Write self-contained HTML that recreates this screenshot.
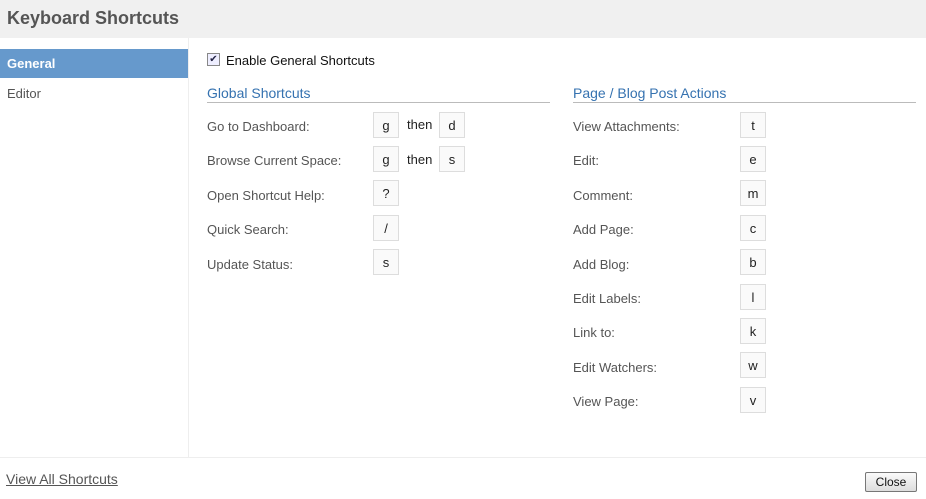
<!DOCTYPE html><html><head><style>
body{margin:0;width:926px;height:499px;position:relative;font-family:"Liberation Sans",Arial,sans-serif;background:#fff;overflow:hidden}
.hd{position:absolute;left:0;top:0;width:926px;height:38px;background:#f0f0f0}
.hd span{position:absolute;left:7px;top:8px;font-size:18px;font-weight:bold;color:#555}
.side{position:absolute;left:0;top:38px;width:188px;height:419px;border-right:1px solid #eee}
.sel{position:absolute;left:0;top:49px;width:188px;height:29px;background:#6699cc;color:#fff;font-weight:bold;font-size:13px;line-height:29px;text-indent:7px}
.ed{position:absolute;left:7px;top:86px;font-size:13px;color:#555}
.ft{position:absolute;left:0;top:457px;width:926px;border-top:1px solid #eee}
.t{position:absolute;font-size:13px;color:#555}
.h{position:absolute;font-size:14px;color:#3572b0;border-bottom:1px solid #bbb;padding-bottom:1px}
.k{position:absolute;width:24px;height:24px;border:1px solid #ddd;background:#fafafa;font-size:13px;color:#222;text-align:center;line-height:26px}
.th{position:absolute;font-size:13px;color:#222}
</style></head><body>
<div class="hd"><span>Keyboard Shortcuts</span></div>
<div class="side"></div>
<div class="sel">General</div>
<div class="ed">Editor</div>
<div style="position:absolute;left:207px;top:53px;width:11px;height:11px;border:1px solid #888;background:#eef;font-size:10px;line-height:11px;text-align:center;color:#224">✔</div>
<div class="t" style="left:226px;top:53px;color:#111">Enable General Shortcuts</div>
<div class="h" style="left:207px;top:85px;width:343px">Global Shortcuts</div>
<div class="h" style="left:573px;top:85px;width:343px">Page / Blog Post Actions</div>

<div class="t" style="left:207px;top:119px">Go to Dashboard:</div>
<div class="k" style="left:373px;top:112px">g</div><div class="th" style="left:407px;top:117px">then</div><div class="k" style="left:439px;top:112px">d</div>
<div class="t" style="left:207px;top:153px">Browse Current Space:</div>
<div class="k" style="left:373px;top:146px">g</div><div class="th" style="left:407px;top:152px">then</div><div class="k" style="left:439px;top:146px">s</div>
<div class="t" style="left:207px;top:188px">Open Shortcut Help:</div><div class="k" style="left:373px;top:180px">?</div>
<div class="t" style="left:207px;top:222px">Quick Search:</div><div class="k" style="left:373px;top:215px">/</div>
<div class="t" style="left:207px;top:257px">Update Status:</div><div class="k" style="left:373px;top:249px">s</div>

<div class="t" style="left:573px;top:119px">View Attachments:</div><div class="k" style="left:740px;top:112px">t</div>
<div class="t" style="left:573px;top:153px">Edit:</div><div class="k" style="left:740px;top:146px">e</div>
<div class="t" style="left:573px;top:188px">Comment:</div><div class="k" style="left:740px;top:180px">m</div>
<div class="t" style="left:573px;top:222px">Add Page:</div><div class="k" style="left:740px;top:215px">c</div>
<div class="t" style="left:573px;top:257px">Add Blog:</div><div class="k" style="left:740px;top:249px">b</div>
<div class="t" style="left:573px;top:291px">Edit Labels:</div><div class="k" style="left:740px;top:284px">l</div>
<div class="t" style="left:573px;top:325px">Link to:</div><div class="k" style="left:740px;top:318px">k</div>
<div class="t" style="left:573px;top:360px">Edit Watchers:</div><div class="k" style="left:740px;top:352px">w</div>
<div class="t" style="left:573px;top:394px">View Page:</div><div class="k" style="left:740px;top:387px">v</div>

<div class="ft"></div>
<div class="t" style="left:6px;top:471px;text-decoration:underline;font-size:14px">View All Shortcuts</div>
<div style="position:absolute;left:865px;top:472px;width:50px;height:18px;border:1px solid #777;border-radius:2px;background:linear-gradient(#fafafa,#ddd);font-size:12px;text-align:center;line-height:18px;color:#111">Close</div>
</body></html>
